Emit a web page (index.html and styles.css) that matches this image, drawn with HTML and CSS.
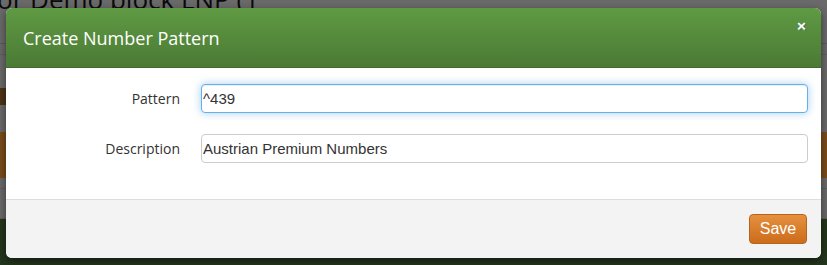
FILE: index.html
```html
<!DOCTYPE html>
<html lang="en">
<head>
    <title>Create Number Pattern</title>
    <meta charset="UTF-8" />
    <meta name="viewport" content="width=device-width" />
    <link rel="stylesheet" href="styles.css">
</head>
<body>
    <div class="page">
        <div class="page-head"><span class="page-title">or Demo block LNP (1</span></div>
        <div class="page-row"></div>
        <div class="page-row tall"><span class="chip"></span></div>
        <div class="page-row btn-row"><span class="page-btn">Save</span></div>
        <div class="page-row thin"></div>
        <div class="page-row mid"></div>
        <div class="page-foot"></div>
    </div>

    <div class="modal">
        <div class="modal-header">
            <h4 class="modal-title">Create Number Pattern</h4>
            <button class="close" type="button">&times;</button>
        </div>
        <div class="modal-body">
            <label class="field-label" for="pattern">Pattern</label>
            <input class="field-input focused" id="pattern" type="text" value="^439" />
            <label class="field-label" for="description">Description</label>
            <input class="field-input" id="description" type="text" value="Austrian Premium Numbers" />
        </div>
        <div class="modal-footer">
            <button class="btn-save" type="button">Save</button>
        </div>
    </div>
</body>
</html>
```

FILE: styles.css
```css
body {
    margin: 0;
    background-color: #6a6a6a;
    font-family: "Open Sans", sans-serif;
    overflow: hidden;
}
.page {
    height: 265px;
    display: flex;
    flex-direction: column;
}
.page-head {
    height: 43px;
    border-bottom: 1px solid #5c5c5c;
    overflow: hidden;
}
.page-title {
    display: block;
    margin: -14px 0 0 -3px;
    font-size: 26px;
    line-height: 26px;
    color: #0a0a0a;
}
.page-row {
    height: 10px;
    border-bottom: 1px solid #5f5f5f;
}
.page-row.tall {
    height: 77px;
    border-bottom: none;
    display: flex;
    flex-direction: column;
    justify-content: center;
}
.chip {
    display: block;
    width: 20px;
    height: 17px;
    background: #4e3316;
    margin-top: 6px;
}
.page-row.btn-row {
    height: 46px;
    background: #7b4c1b;
    border-bottom: none;
}
.page-btn {
    display: block;
    margin-left: -37px;
    padding-top: 13px;
    font-family: "Liberation Sans", Arial, sans-serif;
    font-size: 16px;
    color: #a98d70;
}
.page-row.thin {
    height: 10px;
}
.page-row.mid {
    height: 29px;
}
.page-foot {
    flex: 1;
    background: #24361d;
}

/* dialog */
.modal {
    position: absolute;
    left: 6px;
    top: 8px;
    width: 815px;
    height: 250px;
    background: #fff;
    border-radius: 6px;
    box-shadow: 0 3px 9px rgba(0, 0, 0, 0.5);
    display: flex;
    flex-direction: column;
    overflow: hidden;
}
.modal-header {
    height: 60px;
    box-sizing: border-box;
    padding: 0 17px;
    display: flex;
    align-items: center;
    justify-content: space-between;
    background: linear-gradient(#5f9a43, #4b7a35);
    border-bottom: 1px solid #3e6a2b;
}
.modal-title {
    margin: 0;
    font-size: 18px;
    font-weight: 400;
    color: #fff;
}
.close {
    border: none;
    background: none;
    padding: 0;
    margin: -24px -3px 0 0;
    font-family: "DejaVu Sans", sans-serif;
    font-size: 13px;
    font-weight: bold;
    line-height: 1;
    color: #fff;
    text-shadow: 0 1px 0 rgba(255, 255, 255, 0.4), 1px 1px 1px rgba(0, 60, 120, 0.5);
}
.modal-body {
    display: grid;
    grid-template-columns: 174px 1fr;
    column-gap: 21px;
    row-gap: 21px;
    align-items: center;
    padding: 16px 13px 36px 0;
    border-bottom: 1px solid #dddddd;
}
.field-label {
    text-align: right;
    font-size: 14px;
    color: #333;
}
.field-input {
    height: 29px;
    box-sizing: border-box;
    border: 1px solid #cccccc;
    border-radius: 4px;
    padding: 0 1px;
    font-family: "Liberation Sans", Arial, sans-serif;
    font-size: 15px;
    color: #333;
    outline: none;
}
.field-input.focused {
    border-color: #66afe9;
    box-shadow: inset 0 1px 1px rgba(0, 0, 0, 0.075), 0 0 8px rgba(102, 175, 233, 0.6);
}
.modal-footer {
    flex: 1;
    background: #f3f3f3;
    display: flex;
    justify-content: flex-end;
    align-items: flex-start;
    padding: 14px 14px 0 0;
}
.btn-save {
    width: 58px;
    height: 30px;
    border: 1px solid #b8621c;
    border-radius: 4px;
    background: linear-gradient(#e5903e, #cc6c1d);
    font-family: "Liberation Sans", Arial, sans-serif;
    font-size: 16px;
    color: #fff;
    padding: 0;
}
```
